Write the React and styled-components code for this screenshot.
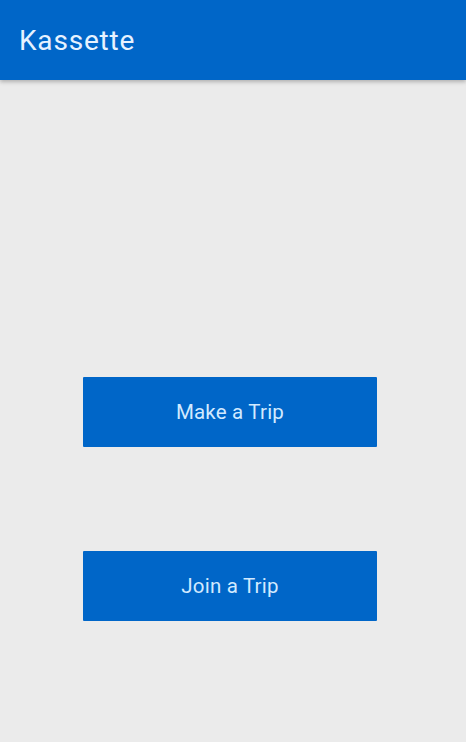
import React from 'react'
import styled, { createGlobalStyle } from 'styled-components'

const GlobalStyle = createGlobalStyle`
  html, body {
    margin: 0;
    padding: 0;
    background: #ebebeb;
    font-family: Roboto, "Liberation Sans", sans-serif;
  }
`

const App = () => {
  return (
    <Page>
      <GlobalStyle />
      <AppBar>
        <Title>Kassette</Title>
      </AppBar>
      <Content>
        <TripButton>Make a Trip</TripButton>
        <TripButton>Join a Trip</TripButton>
      </Content>
    </Page>
  )
}

export default App

const Page = styled.div`
  width: 466px;
  height: 742px;
  background: #ebebeb;
  overflow: hidden;
`

const AppBar = styled.header`
  height: 80px;
  background: #0066c8;
  display: flex;
  align-items: center;
  padding: 0 19px;
  box-shadow: 0 2px 4px rgba(0, 0, 0, 0.25);
`

const Title = styled.h1`
  margin: 0;
  font-size: 28px;
  font-weight: 400;
  letter-spacing: 0.8px;
  color: #e6f2ff;
`

const Content = styled.main`
  display: flex;
  flex-direction: column;
  gap: 104px;
  padding: 297px 0 0 83px;
`

const TripButton = styled.button`
  width: 294px;
  height: 70px;
  border: none;
  border-radius: 1px;
  background: #0066c8;
  color: #d2eaff;
  font-family: Roboto, "Liberation Sans", sans-serif;
  font-size: 20.5px;
  letter-spacing: 0.2px;
  cursor: pointer;
`
